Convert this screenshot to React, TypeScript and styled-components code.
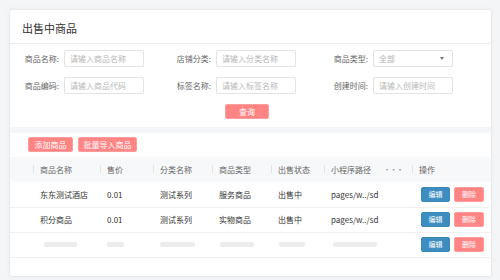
import React from "react";
import styled, { createGlobalStyle } from "styled-components";

const GlobalStyle = createGlobalStyle`
  html, body {
    margin: 0;
    padding: 0;
    background: #f4f5f7;
  }
  * {
    box-sizing: border-box;
  }
  body {
    font-family: "Noto Sans CJK SC", "Noto Sans", "Liberation Sans", sans-serif;
  }
`;

type Column = { title: string; width: number; more?: boolean };

const columns: Column[] = [
  { title: "", width: 23 },
  { title: "商品名称", width: 67 },
  { title: "售价", width: 53 },
  { title: "分类名称", width: 59 },
  { title: "商品类型", width: 59 },
  { title: "出售状态", width: 53 },
  { title: "小程序路径", width: 88, more: true },
  { title: "操作", width: 79 },
];

const rows = [
  ["东东测试酒店", "0.01", "测试系列", "服务商品", "出售中", "pages/w../sd"],
  ["积分商品", "0.01", "测试系列", "实物商品", "出售中", "pages/w../sd"],
];

// skeleton bar offsets/widths for the loading row
const skeleton = [
  { offset: 4, width: 33 },
  { offset: 0, width: 17 },
  { offset: 0, width: 35 },
  { offset: 1, width: 34 },
  { offset: 1, width: 26 },
  { offset: 2, width: 44 },
];

export const App: React.FC = () => {
  return (
    <>
      <GlobalStyle />
      <Page>
        <Card>
          <Header>
            <Title>出售中商品</Title>
          </Header>
          <Form>
            <Label>商品名称:</Label>
            <Input placeholder="请输入商品名称" />
            <Label>店铺分类:</Label>
            <Input placeholder="请输入分类名称" />
            <Label>商品类型:</Label>
            <Select>
              <span>全部</span>
              <Caret />
            </Select>
            <Label>商品编码:</Label>
            <Input placeholder="请输入商品代码" />
            <Label>标签名称:</Label>
            <Input placeholder="请输入标签名称" />
            <Label>创建时间:</Label>
            <Input placeholder="请输入创建时间" />
          </Form>
          <QueryRow>
            <PinkButton $width={44}>查询</PinkButton>
          </QueryRow>
          <Divider />
          <Toolbar>
            <PinkButton $width={45}>添加商品</PinkButton>
            <PinkButton $width={59}>批量导入商品</PinkButton>
          </Toolbar>
          <Table>
            <thead>
              <tr>
                {columns.map((c, i) => (
                  <Th key={i} $width={c.width} $sep={i > 0}>
                    {c.title}
                    {c.more && <More>···</More>}
                  </Th>
                ))}
              </tr>
            </thead>
            <tbody>
              {rows.map((r, i) => (
                <Tr key={i}>
                  <Td />
                  {r.map((v, j) => (
                    <Td key={j}>{v}</Td>
                  ))}
                  <Td>
                    <Actions>
                      <BlueButton>编辑</BlueButton>
                      <PinkButton $width={30} $small>
                        删除
                      </PinkButton>
                    </Actions>
                  </Td>
                </Tr>
              ))}
              <Tr>
                <Td />
                {skeleton.map((s, j) => (
                  <Td key={j}>
                    <Bar $offset={s.offset} $width={s.width} />
                  </Td>
                ))}
                <Td>
                  <Actions>
                    <BlueButton>编辑</BlueButton>
                    <PinkButton $width={30} $small>
                      删除
                    </PinkButton>
                  </Actions>
                </Td>
              </Tr>
            </tbody>
          </Table>
        </Card>
      </Page>
    </>
  );
};

const Page = styled.div`
  width: 500px;
  height: 280px;
  padding: 9px 8px 3px 9px;
`;

const Card = styled.div`
  width: 483px;
  height: 268px;
  background: #fff;
  border: 1px solid #e9eaec;
  border-radius: 3px;
  box-shadow: 0 0 5px rgba(0, 0, 0, 0.04);
  overflow: hidden;
`;

const Header = styled.div`
  height: 34px;
  display: flex;
  align-items: center;
  padding-left: 12px;
  border-bottom: 1px solid #ebebeb;
`;

const Title = styled.span`
  font-size: 11px;
  color: #333;
  padding-top: 2px;
`;

const Form = styled.div`
  display: grid;
  grid-template-columns: 44px 80px 72px 80px 77px 80px;
  grid-auto-rows: 17px;
  row-gap: 10px;
  align-items: center;
  padding: 6px 0 0 10px;
`;

const Label = styled.label`
  font-size: 8px;
  color: #666;
  text-align: right;
  padding-right: 5px;
  white-space: nowrap;
`;

const Input = styled.input`
  width: 80px;
  height: 17px;
  border: 1px solid #e3e3e3;
  border-radius: 2px;
  padding: 0 5px;
  font-size: 8px;
  font-family: inherit;
  color: #333;
  outline: none;
  &::placeholder {
    color: #b8b8b8;
  }
`;

const Select = styled.div`
  width: 80px;
  height: 17px;
  border: 1px solid #e3e3e3;
  border-radius: 2px;
  padding: 0 8px 0 5px;
  font-size: 8px;
  color: #b0b0b0;
  display: flex;
  align-items: center;
  justify-content: space-between;
`;

const Caret = styled.i`
  width: 0;
  height: 0;
  border-left: 2.5px solid transparent;
  border-right: 2.5px solid transparent;
  border-top: 3px solid #777;
`;

const QueryRow = styled.div`
  display: flex;
  justify-content: center;
  padding: 10px 7px 0 0;
`;

const PinkButton = styled.button<{ $width: number; $small?: boolean }>`
  width: ${(p) => p.$width}px;
  height: 15px;
  padding: 0;
  border: 1px solid #ff9c9c;
  border-radius: 2px;
  background: #ff8585;
  color: #fff;
  font-size: ${(p) => (p.$small ? 7 : 8)}px;
  font-family: inherit;
  line-height: 13px;
`;

const BlueButton = styled.button`
  width: 29px;
  height: 15px;
  padding: 0;
  border: 1px solid #3a87b8;
  border-radius: 2px;
  background: #3d8dc1;
  color: #fff;
  font-size: 7px;
  font-family: inherit;
  line-height: 13px;
`;

const Divider = styled.div`
  height: 6px;
  margin-top: 8px;
  background: #f4f5f7;
`;

const Toolbar = styled.div`
  display: flex;
  gap: 5px;
  padding: 4px 0 0 18px;
`;

const Table = styled.table`
  margin-top: 5px;
  width: 481px;
  border-collapse: collapse;
  table-layout: fixed;
`;

const Th = styled.th<{ $width: number; $sep: boolean }>`
  position: relative;
  width: ${(p) => p.$width}px;
  height: 25px;
  padding: 0 0 0 7px;
  background: #f7f8fa;
  font-size: 8px;
  font-weight: normal;
  color: #666;
  text-align: left;
  white-space: nowrap;
  &::before {
    content: "";
    display: ${(p) => (p.$sep ? "block" : "none")};
    position: absolute;
    left: 0;
    top: 8px;
    width: 1px;
    height: 8px;
    background: #e3e3e3;
  }
`;

const More = styled.span`
  margin-left: 12px;
  color: #999;
  letter-spacing: -1.5px;
`;

const Tr = styled.tr`
  border-bottom: 1px solid #f0f0f0;
`;

const Td = styled.td`
  height: 25px;
  padding: 0 0 0 7px;
  font-size: 8px;
  color: #333;
  white-space: nowrap;
`;

const Actions = styled.div`
  display: flex;
  gap: 4px;
  padding-left: 2px;
`;

const Bar = styled.div<{ $offset: number; $width: number }>`
  width: ${(p) => p.$width}px;
  height: 5px;
  margin-left: ${(p) => p.$offset}px;
  border-radius: 3px;
  background: #ececec;
`;

export default App;
